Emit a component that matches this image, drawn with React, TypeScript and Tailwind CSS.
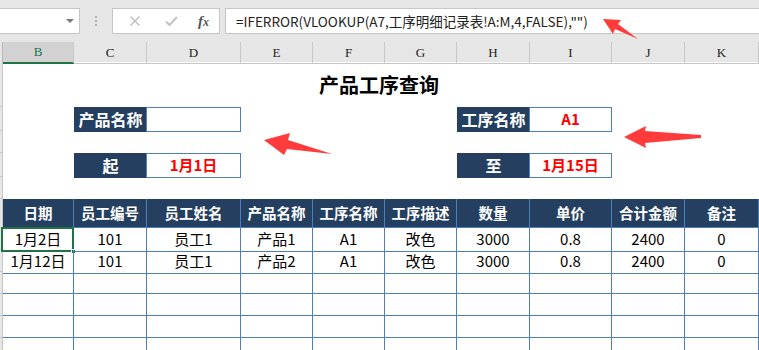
import React from 'react';

const COLS = ['B', 'C', 'D', 'E', 'F', 'G', 'H', 'I', 'J', 'K'];
const GRID = 'grid grid-cols-[71px_73px_94px_72px_72px_72px_73px_82px_73px_74px]';
const CJK = "font-['Noto_Sans_CJK_SC',sans-serif]";

const HEADERS = ['日期', '员工编号', '员工姓名', '产品名称', '工序名称', '工序描述', '数量', '单价', '合计金额', '备注'];
const ROWS = [
    ['1月2日', '101', '员工1', '产品1', 'A1', '改色', '3000', '0.8', '2400', '0'],
    ['1月12日', '101', '员工1', '产品2', 'A1', '改色', '3000', '0.8', '2400', '0'],
    ['', '', '', '', '', '', '', '', '', ''],
    ['', '', '', '', '', '', '', '', '', ''],
    ['', '', '', '', '', '', '', '', '', ''],
    ['', '', '', '', '', '', '', '', '', ''],
];

// narrow row-header strip on the far left
const Strip = ({ h }: { h: string }) => (
    <div className={`w-[3px] shrink-0 ${h} bg-[#e6e6e6] border-r border-b border-[#c6c6c6]`} />
);

const Label = ({ text }: { text: string }) => (
    <div className="bg-[#243f60] text-white font-bold text-[16px] flex items-center justify-center">
        {text}
    </div>
);

const Value = ({ text }: { text: string }) => (
    <div className="border border-[#4f7fbb] -ml-px bg-white text-[#ff0000] font-bold text-[15px] flex items-center justify-center">
        {text}
    </div>
);

const Arrows = () => (
    <svg className="absolute inset-0 pointer-events-none" width="759" height="350" viewBox="0 0 759 350">
        <g fill="#ff3b3b">
            <polygon points="603,19 621,20 618,24 638,39 615,29 613,34" />
            <polygon points="264,140 290,133 288,140 332,154 287,149 284,155" />
            <polygon points="624,137 646,126 645,131 701,135 701,138 645,143 646,148" />
        </g>
    </svg>
);

export default function App() {
    return (
        <div className={`relative w-[759px] h-[350px] overflow-hidden bg-[#e6e6e6] ${CJK}`}>
            {/* formula bar */}
            <div className="h-[42px] pt-[8px] flex items-start">
                <div className="w-[80px] h-[26px] bg-white border border-[#c6c6c6] border-l-0 relative">
                    <div className="absolute left-[66px] top-[10px] w-0 h-0 border-l-[4px] border-r-[4px] border-t-[4px] border-l-transparent border-r-transparent border-t-[#7a7a7a]" />
                </div>
                <div className="w-[32px] h-[26px] flex flex-col items-center justify-center gap-[2px]">
                    <span className="w-[2px] h-[2px] bg-[#b4b4b4]" />
                    <span className="w-[2px] h-[2px] bg-[#b4b4b4]" />
                    <span className="w-[2px] h-[2px] bg-[#b4b4b4]" />
                </div>
                <div className="w-[108px] h-[26px] bg-white border border-[#c6c6c6] flex items-center">
                    <svg className="ml-[16px]" width="12" height="12" viewBox="0 0 12 12">
                        <path d="M1.5 1.5 L10.5 10.5 M10.5 1.5 L1.5 10.5" stroke="#c4c4c4" strokeWidth="1.6" />
                    </svg>
                    <svg className="ml-[24px]" width="13" height="12" viewBox="0 0 13 12">
                        <path d="M1 6.5 L4.5 10 L12 2" stroke="#c4c4c4" strokeWidth="2" fill="none" />
                    </svg>
                    <span className="ml-[20px] font-['Liberation_Serif',serif] italic font-bold text-[15px] text-[#555] leading-none">
                        f<span className="text-[12px]">x</span>
                    </span>
                </div>
                <div className="ml-[5px] flex-1 h-[26px] bg-white border border-[#c6c6c6] border-r-0 flex items-center pl-[10px] text-[13.5px] text-[#222] whitespace-nowrap">
                    =IFERROR(VLOOKUP(A7,工序明细记录表!A:M,4,FALSE),"")
                </div>
            </div>

            {/* column letters */}
            <div className="flex h-[20px]">
                <div className="w-[3px] shrink-0 border-r border-[#b8b8b8]" />
                <div className={`${GRID} flex-1 font-['Liberation_Serif',serif] text-[13px]`}>
                    {COLS.map((c) => (
                        <div
                            key={c}
                            className={`flex items-center justify-center border-r border-[#c8c8c8] ${c === 'B' ? 'bg-[#d2d2d2] text-[#217346] border-b-2 border-b-[#217346]' : 'text-[#222] border-b border-b-[#c6c6c6]'}`}
                        >
                            {c}
                        </div>
                    ))}
                </div>
            </div>

            {/* sheet */}
            <div className="bg-white">
                <div className="flex h-[45px]">
                    <Strip h="h-[45px]" />
                    <div className="flex-1 flex items-center justify-center pr-[4px] text-[20px] font-bold text-black">产品工序查询</div>
                </div>
                <div className="flex h-[24px]">
                    <Strip h="h-[24px]" />
                    <div className={`${GRID} flex-1`}>
                        <div />
                        <Label text="产品名称" />
                        <Value text="" />
                        <div />
                        <div />
                        <div />
                        <Label text="工序名称" />
                        <Value text="A1" />
                    </div>
                </div>
                <div className="flex h-[22px]">
                    <Strip h="h-[22px]" />
                </div>
                <div className="flex h-[24px]">
                    <Strip h="h-[24px]" />
                    <div className={`${GRID} flex-1`}>
                        <div />
                        <Label text="起" />
                        <Value text="1月1日" />
                        <div />
                        <div />
                        <div />
                        <Label text="至" />
                        <Value text="1月15日" />
                    </div>
                </div>
                <div className="flex h-[22px]">
                    <Strip h="h-[22px]" />
                </div>

                {/* table header */}
                <div className="flex h-[29px]">
                    <Strip h="h-[29px]" />
                    <div className={`${GRID} flex-1 bg-[#243f60]`}>
                        {HEADERS.map((t) => (
                            <div key={t} className="flex items-center justify-center border-r border-b border-[#4f7fbb] text-white font-bold text-[14.5px]">
                                {t}
                            </div>
                        ))}
                    </div>
                </div>

                {ROWS.map((r, i) => (
                    <div key={i} className="flex h-[22px]">
                        <Strip h="h-[22px]" />
                        <div className={`${GRID} flex-1`}>
                            {r.map((t, j) => (
                                <div key={j} className="relative flex items-center justify-center border-r border-b border-[#4f7fbb] text-[15px] text-black">
                                    {t}
                                    {i === 0 && j === 0 && (
                                        <div className="absolute -left-[2px] -top-[1px] -right-[1px] -bottom-[1px] border-2 border-[#217346]">
                                            <div className="absolute -right-[4px] -bottom-[4px] w-[5px] h-[5px] bg-[#217346] border border-white" />
                                        </div>
                                    )}
                                </div>
                            ))}
                        </div>
                    </div>
                ))}
            </div>

            <Arrows />
        </div>
    );
}
